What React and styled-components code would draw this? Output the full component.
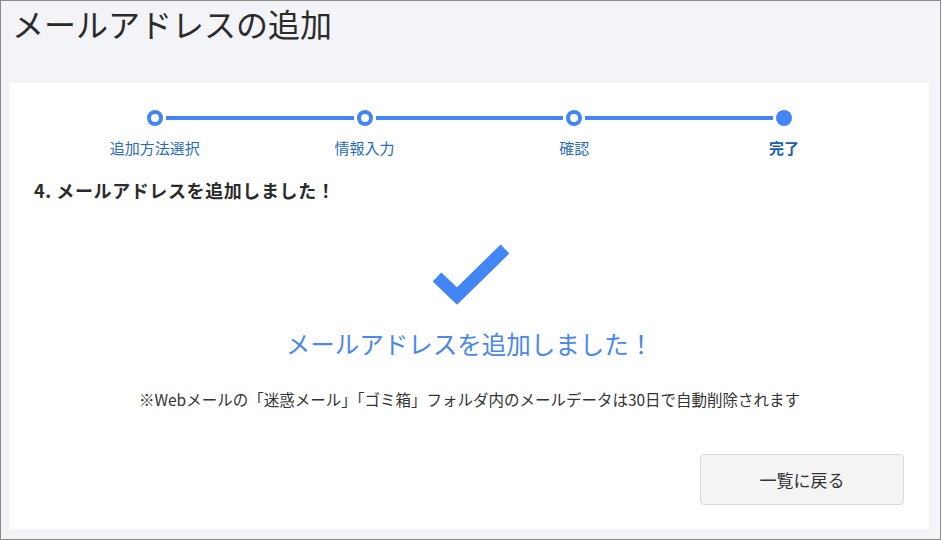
import React from 'react';
import styled, { createGlobalStyle } from 'styled-components';

const GlobalStyle = createGlobalStyle`
  html, body {
    margin: 0;
    padding: 0;
    background: #ffffff;
  }
  * {
    box-sizing: border-box;
  }
`;

const Frame = styled.div`
  width: 941px;
  height: 540px;
  border: 1px solid #8a8a8a;
  background-color: #f3f4f8;
  font-family: 'Noto Sans CJK JP', 'Noto Sans', sans-serif;
  color: #333333;
  display: flex;
  flex-direction: column;
  padding: 0 11px 10px 9px;
  overflow: hidden;
`;

const Title = styled.h1`
  margin: 0;
  padding: 0 0 0 2px;
  height: 82px;
  font-size: 32px;
  font-weight: 400;
  line-height: 44px;
  color: #2b2b2b;
`;

const Panel = styled.div`
  flex: 1;
  background-color: #ffffff;
  display: flex;
  flex-direction: column;
  padding: 26px 24px 24px 24px;
`;

const Stepper = styled.ol`
  list-style: none;
  margin: 0;
  padding: 0 16px;
  display: grid;
  grid-template-columns: repeat(4, 1fr);
`;

const Step = styled.li`
  display: flex;
  flex-direction: column;
  align-items: center;
`;

const Track = styled.div`
  width: 100%;
  height: 18px;
  display: flex;
  align-items: center;
`;

const Line = styled.span`
  flex: 1;
  height: 4px;
  background-color: ${(p) => (p.$blank ? 'transparent' : '#4285f4')};
  margin: ${(p) => (p.$side === 'left' ? '0 3px 0 0' : '0 0 0 3px')};
`;

const Dot = styled.span`
  width: 16px;
  height: 16px;
  border-radius: 50%;
  background-color: ${(p) => (p.$done ? '#4285f4' : '#ffffff')};
  border: ${(p) => (p.$done ? '0' : '4px solid #4285f4')};
  flex: none;
`;

const StepLabel = styled.span`
  margin-top: 10px;
  font-size: 15px;
  line-height: 22px;
  font-weight: ${(p) => (p.$current ? 700 : 400)};
  color: ${(p) => (p.$current ? '#1b5fae' : '#2a6cba')};
`;

const Heading = styled.h2`
  margin: 18px 0 0 0;
  font-size: 18px;
  font-weight: 700;
  line-height: 26px;
  letter-spacing: 0.6px;
  color: #2b2b2b;
`;

const Result = styled.div`
  display: flex;
  flex-direction: column;
  align-items: center;
  margin-top: 38px;
`;

const Message = styled.p`
  margin: 22px 0 0 0;
  font-size: 24.5px;
  line-height: 34px;
  color: #4a88ee;
`;

const Note = styled.p`
  margin: 27px 0 0 0;
  font-size: 15.5px;
  line-height: 22px;
  color: #333333;
`;

const Actions = styled.div`
  display: flex;
  justify-content: flex-end;
  margin-top: 44px;
`;

const BackButton = styled.button`
  width: 204px;
  height: 51px;
  margin-right: 1px;
  background-color: #f4f4f4;
  border: 1px solid #d9d9d9;
  border-radius: 4px;
  font-family: inherit;
  font-size: 17px;
  color: #333333;
  cursor: pointer;
`;

const CheckIcon = () => (
  <svg width="84" height="64" viewBox="0 0 84 64">
    <polyline
      points="9,36 29,55 77,8"
      fill="none"
      stroke="#4285f4"
      strokeWidth="12.5"
      strokeLinejoin="miter"
      strokeLinecap="butt"
    />
  </svg>
);

const steps = ['追加方法選択', '情報入力', '確認', '完了'];

const App = () => {
  return (
    <>
      <GlobalStyle />
      <Frame>
        <Title>メールアドレスの追加</Title>
        <Panel>
          <Stepper>
            {steps.map((label, index) => {
              const current = index === steps.length - 1;
              return (
                <Step key={label}>
                  <Track>
                    <Line $side="left" $blank={index === 0} />
                    <Dot $done={current} />
                    <Line $side="right" $blank={current} />
                  </Track>
                  <StepLabel $current={current}>{label}</StepLabel>
                </Step>
              );
            })}
          </Stepper>
          <Heading>4. メールアドレスを追加しました！</Heading>
          <Result>
            <CheckIcon />
            <Message>メールアドレスを追加しました！</Message>
            <Note>
              ※Webメールの「迷惑メール」「ゴミ箱」フォルダ内のメールデータは30日で自動削除されます
            </Note>
          </Result>
          <Actions>
            <BackButton>一覧に戻る</BackButton>
          </Actions>
        </Panel>
      </Frame>
    </>
  );
};

export default App;
